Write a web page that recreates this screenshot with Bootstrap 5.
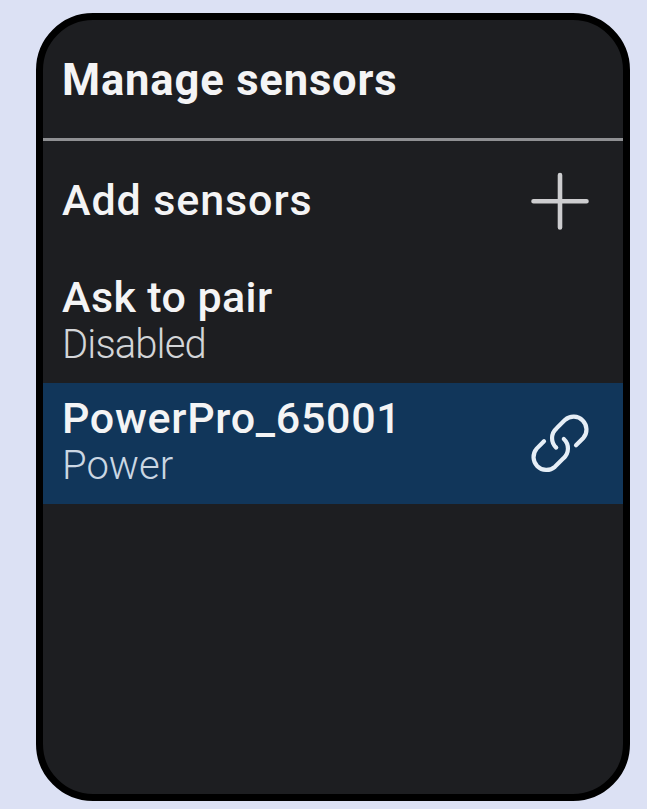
<!DOCTYPE html>
<html lang="en">
<head>
<meta charset="utf-8">
<meta name="viewport" content="width=device-width, initial-scale=1">
<title>Manage sensors</title>
<link href="https://cdn.jsdelivr.net/npm/bootstrap@5.3.0/dist/css/bootstrap.min.css" rel="stylesheet">
<style>
  body { background: #dce1f4; font-family: Roboto, "Liberation Sans", sans-serif; color: #f4f4f5; }
  .device { width: 594px; height: 788px; margin: 13px 0 0 36px; border: 7px solid #000; border-radius: 57px; background: #1d1e21; }
  .device-header { height: 121px; border-bottom: 3px solid #8f9093; padding: 0 19px; }
  .device-header h1 { font-size: 43.5px; line-height: 52px; font-weight: 700; letter-spacing: .85px; padding-top: 4px; }
  .sensor-row { height: 121px; padding: 0 33px 3px 19px; background: transparent; color: inherit; border: 0; }
  .sensor-row.selected { background: #11365a; }
  .sensor-name { font-size: 43px; line-height: 46px; font-weight: 500; letter-spacing: .7px; }
  .sensor-add { letter-spacing: .9px; }
  .sensor-ask { letter-spacing: .4px; }
  .sensor-info { font-size: 40px; line-height: 46px; padding-top: 2px; font-weight: 300; color: #d3d5d8; }
  .sensor-state { letter-spacing: -.9px; }
  .selected .sensor-info { color: #cbd7e3; }
</style>
</head>
<body class="overflow-hidden">
<main class="device overflow-hidden">
  <header class="device-header d-flex align-items-center">
    <h1 class="m-0">Manage sensors</h1>
  </header>
  <div class="list-group list-group-flush">
    <div class="sensor-row list-group-item d-flex align-items-center justify-content-between">
      <div class="sensor-name sensor-add">Add sensors</div>
      <svg width="60" height="60" viewBox="0 0 60 60" fill="none" stroke="#cdcdcf" stroke-width="4.6" stroke-linecap="round"><path d="M3.5 31.3H56.5M30 5V57.5"/></svg>
    </div>
    <div class="sensor-row list-group-item d-flex align-items-center">
      <div>
        <div class="sensor-name sensor-ask">Ask to pair</div>
        <div class="sensor-info sensor-state">Disabled</div>
      </div>
    </div>
    <div class="sensor-row selected list-group-item d-flex align-items-center justify-content-between">
      <div>
        <div class="sensor-name">PowerPro_65001</div>
        <div class="sensor-info">Power</div>
      </div>
      <svg class="overflow-visible" width="60" height="60" viewBox="0 0 60 60" fill="none" stroke="#e6eef6" stroke-width="4.2" stroke-linecap="round">
        <path id="link-half" d="M46 33.300L53.3 26A12.9 12.9 0 0 0 35.100 7.800L26.600 16.300A12.900 12.900 0 0 0 26.2 35.6"/>
        <use href="#link-half" transform="rotate(180 30 31.300)"/>
      </svg>
    </div>
  </div>
</main>
<script src="https://cdn.jsdelivr.net/npm/bootstrap@5.3.0/dist/js/bootstrap.bundle.min.js"></script>
</body>
</html>
